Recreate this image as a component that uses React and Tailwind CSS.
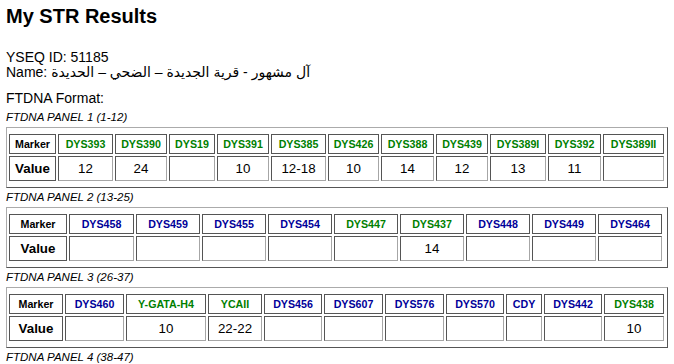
import React from "react";

const G = "text-[#008000]";
const B = "text-[#000099]";

const panels = [
  {
    title: "FTDNA PANEL 1 (1-12)",
    markerW: "w-[47px]",
    cells: [
      { m: "DYS393", v: "12", c: G, w: "w-[55px]" },
      { m: "DYS390", v: "24", c: G, w: "w-[52px]" },
      { m: "DYS19", v: "", c: G, w: "w-[46px]" },
      { m: "DYS391", v: "10", c: G, w: "w-[52px]" },
      { m: "DYS385", v: "12-18", c: G, w: "w-[55px]" },
      { m: "DYS426", v: "10", c: G, w: "w-[51px]" },
      { m: "DYS388", v: "14", c: G, w: "w-[53px]" },
      { m: "DYS439", v: "12", c: G, w: "w-[52px]" },
      { m: "DYS389I", v: "13", c: G, w: "w-[56px]" },
      { m: "DYS392", v: "11", c: G, w: "w-[53px]" },
      { m: "DYS389II", v: "", c: G, w: "w-[61px]" },
    ],
  },
  {
    title: "FTDNA PANEL 2 (13-25)",
    markerW: "w-[58px]",
    cells: [
      { m: "DYS458", v: "", c: B, w: "w-[65px]" },
      { m: "DYS459", v: "", c: B, w: "w-[64px]" },
      { m: "DYS455", v: "", c: B, w: "w-[64px]" },
      { m: "DYS454", v: "", c: B, w: "w-[64px]" },
      { m: "DYS447", v: "", c: G, w: "w-[64px]" },
      { m: "DYS437", v: "14", c: G, w: "w-[64px]" },
      { m: "DYS448", v: "", c: B, w: "w-[64px]" },
      { m: "DYS449", v: "", c: B, w: "w-[64px]" },
      { m: "DYS464", v: "", c: B, w: "w-[64px]" },
    ],
  },
  {
    title: "FTDNA PANEL 3 (26-37)",
    markerW: "w-[54px]",
    cells: [
      { m: "DYS460", v: "", c: B, w: "w-[59px]" },
      { m: "Y-GATA-H4", v: "10", c: G, w: "w-[80px]" },
      { m: "YCAII", v: "22-22", c: G, w: "w-[54px]" },
      { m: "DYS456", v: "", c: B, w: "w-[58px]" },
      { m: "DYS607", v: "", c: B, w: "w-[59px]" },
      { m: "DYS576", v: "", c: B, w: "w-[59px]" },
      { m: "DYS570", v: "", c: B, w: "w-[58px]" },
      { m: "CDY", v: "", c: B, w: "w-[36px]" },
      { m: "DYS442", v: "", c: B, w: "w-[58px]" },
      { m: "DYS438", v: "10", c: G, w: "w-[60px]" },
    ],
  },
];

function Panel({ panel, first }) {
  return (
    <div>
      <div className={`${first ? "mt-[4px]" : "mt-[2px]"} text-[11.5px] leading-[14px] italic`}>
        {panel.title}
      </div>
      <div className="mt-[3px] border border-t-[#ababab] border-l-[#ababab] border-b-[#555555] border-r-[#555555] pt-[4px] pb-[4px]">
        <table className="border-separate border-spacing-[2px]">
          <tbody>
            <tr>
              <td className={`${panel.markerW} h-[20px] p-0 border border-[#555555] text-center text-[10.67px] font-bold text-black`}>
                Marker
              </td>
              {panel.cells.map((c) => (
                <td
                  key={c.m}
                  className={`${c.w} h-[20px] p-0 border border-[#555555] text-center text-[10.67px] font-bold whitespace-nowrap ${c.c}`}
                >
                  {c.m}
                </td>
              ))}
            </tr>
            <tr>
              <td className="h-[25px] p-0 border border-[#555555] text-center text-[13.33px] font-bold text-black">
                Value
              </td>
              {panel.cells.map((c) => (
                <td
                  key={c.m}
                  className="h-[25px] p-0 border border-t-[#555555] border-l-[#555555] border-b-[#a6a6a6] border-r-[#a6a6a6] text-center text-[13.33px] text-black"
                >
                  {c.v}
                </td>
              ))}
            </tr>
          </tbody>
        </table>
      </div>
    </div>
  );
}

export default function App() {
  return (
    <div className="h-[364px] overflow-hidden bg-white px-[6px] pt-[5px] font-['Liberation_Sans','DejaVu_Sans',sans-serif] text-black">
      <h1 className="text-[20px] leading-[23px] font-bold">My STR Results</h1>

      <div className="mt-[22px] text-[14px] leading-[15px]">
        <div>YSEQ ID: 51185</div>
        <div>Name: آل مشهور - قرية الجديدة – الضحي – الحديدة</div>
      </div>

      <div className="mt-[11px] text-[14px] leading-[15px]">FTDNA Format:</div>

      {panels.map((p, i) => (
        <Panel key={p.title} panel={p} first={i === 0} />
      ))}

      <div className="mt-[2px] text-[11.5px] leading-[14px] italic">FTDNA PANEL 4 (38-47)</div>
    </div>
  );
}
